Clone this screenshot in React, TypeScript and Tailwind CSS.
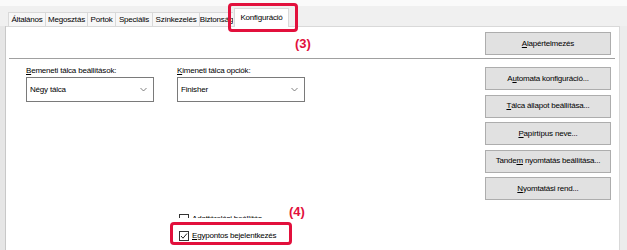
import type { ReactNode } from "react"

const tabs = [
  { label: "Általános", w: "w-[37px]" },
  { label: "Megosztás", w: "w-[42px]" },
  { label: "Portok", w: "w-[28px]" },
  { label: "Speciális", w: "w-[37px]" },
  { label: "Színkezelés", w: "w-[47px]" },
  { label: "Biztonság", w: "w-[34px]" },
]

const U = ({ children }: { children: ReactNode }) => (
  <span className="underline underline-offset-[1px]">{children}</span>
)

const Btn = ({ children }: { children: ReactNode }) => (
  <div className="flex h-[23px] w-[126px] items-center justify-center border border-[#adadad] bg-[#e1e1e1] text-[8px] text-black">
    <span>{children}</span>
  </div>
)

const Select = ({ value }: { value: string }) => (
  <div className="flex h-[25px] w-[128px] items-center justify-between border border-[#7a7a7a] bg-white pl-[3px] pr-[6px] text-[8px] text-black">
    <span>{value}</span>
    <svg width="7" height="5" viewBox="0 0 7 5" fill="none">
      <path d="M0.5 1 L3.5 4 L6.5 1" stroke="#606060" strokeWidth="0.8" />
    </svg>
  </div>
)

const Check = ({ checked }: { checked?: boolean }) => (
  <div className="flex h-[10px] w-[10px] shrink-0 items-center justify-center border border-[#333] bg-white">
    {checked && (
      <svg width="8" height="8" viewBox="0 0 8 8" fill="none">
        <path d="M1 4 L3 6.2 L7 1.5" stroke="#222" strokeWidth="1" />
      </svg>
    )}
  </div>
)

export default function App() {
  return (
    <div className="relative flex h-[250px] w-[627px] flex-col overflow-hidden bg-[#f0f0f0] font-['Liberation_Sans',Arial,sans-serif] tracking-[-0.2px]">
      <div className="h-[6px] bg-[#fafafa]" />

      {/* tab strip */}
      <div className="flex h-[20px] items-end pl-[8px]">
        {tabs.map(({ label, w }) => (
          <div
            key={label}
            className={`${w} flex h-[14px] items-center justify-center overflow-hidden whitespace-nowrap border border-b-0 border-r-0 border-[#d9d9d9] bg-[#f7f7f7] text-[8px] text-black last:justify-start last:pl-[3px]`}
          >
            {label}
          </div>
        ))}
        <div className="relative z-10 -mb-[1px] ml-[1px] flex h-[19px] w-[55px] items-center justify-center border border-b-0 border-[#d9d9d9] bg-white text-[8px] text-black">
          Konfiguráció
        </div>
      </div>

      <div className="flex flex-1">
        <div className="w-[6px] border-r border-[#c8c8c8] bg-[#e6e6e6]" />

        <div className="flex flex-1 flex-col border-t border-r border-[#d9d9d9] bg-white">
          <div className="flex justify-end pr-[8px] pt-[5px]">
            <Btn>
              <U>A</U>lapértelmezés
            </Btn>
          </div>
          <div className="mx-[3px] mt-[3px] mr-[4px] h-[1px] bg-[#a0a0a0]" />

          <div className="flex flex-1 justify-between pr-[8px]">
            <div className="flex flex-col pl-[20px] pt-[7px]">
              <div className="flex gap-[23px]">
                <div className="flex flex-col gap-[1px]">
                  <div className="h-[10px] text-[8px] leading-[10px] text-black">
                    <U>B</U>emeneti tálca beállítások:
                  </div>
                  <Select value="Négy tálca" />
                </div>
                <div className="flex flex-col gap-[1px]">
                  <div className="h-[10px] text-[8px] leading-[10px] text-black">
                    <U>K</U>imeneti tálca opciók:
                  </div>
                  <Select value="Finisher" />
                </div>
              </div>

              <div className="ml-[153px] mt-[111px] flex flex-col gap-[5px]">
                <div className="flex items-center gap-[3px] text-[8px] text-black">
                  <Check />
                  <span>Adattárolási beállítás</span>
                </div>
                <div className="flex items-center gap-[3px] text-[8px] text-black">
                  <Check checked />
                  <span>
                    <U>E</U>gypontos bejelentkezés
                  </span>
                </div>
              </div>
            </div>

            <div className="flex flex-col gap-[4.5px] pt-[8px]">
              <Btn>
                A<U>u</U>tomata konfiguráció...
              </Btn>
              <Btn>
                <U>T</U>álca állapot beállítása...
              </Btn>
              <Btn>
                <U>P</U>apírtípus neve...
              </Btn>
              <Btn>
                Tande<U>m</U> nyomtatás beállítása...
              </Btn>
              <Btn>
                <U>N</U>yomtatási rend...
              </Btn>
            </div>
          </div>
        </div>

        <div className="w-[7px] bg-[#ececec]" />
      </div>

      {/* callouts */}
      <div className="absolute left-[228px] top-[3px] h-[29px] w-[70px] rounded-[4px] border-[3px] border-[#e2103c]" />
      <div className="absolute left-[295px] top-[36px] text-[13px] font-bold leading-[16px] tracking-normal text-[#e2103c]">
        (3)
      </div>
      <div className="absolute left-[170px] top-[222px] h-[23px] w-[122px] rounded-[4px] border-[3px] border-[#e2103c] shadow-[0_0_0_4px_white]" />
      <div className="absolute left-[289px] top-[204px] text-[13px] font-bold leading-[16px] tracking-normal text-[#e2103c]">
        (4)
      </div>
    </div>
  )
}
